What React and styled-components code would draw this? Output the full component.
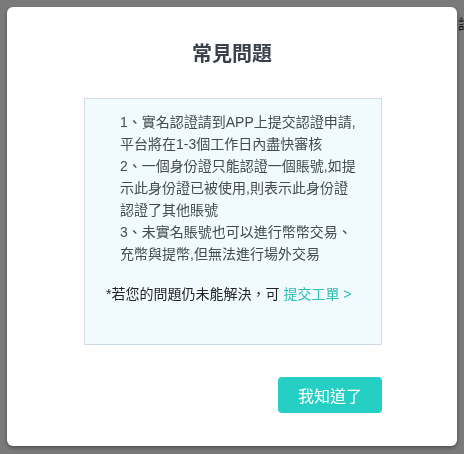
import React from "react";
import styled, { createGlobalStyle } from "styled-components";

const Global = createGlobalStyle`
  html, body { margin: 0; padding: 0; }
  body {
    width: 464px;
    height: 454px;
    overflow: hidden;
    background: #ffffff;
    font-family: "Liberation Sans", "Noto Sans CJK TC", sans-serif;
  }
`;

const Page = styled.div`
  width: 464px;
  height: 454px;
  overflow: hidden;
`;

const PageHeader = styled.div`
  display: flex;
  padding: 13px 0 0 458px;
  white-space: nowrap;
  font-size: 14px;
  color: #222;
`;

const Backdrop = styled.div`
  position: fixed;
  inset: 0;
  background: rgba(0, 0, 0, 0.52);
  display: flex;
  justify-content: flex-start;
  align-items: flex-start;
  padding: 7px 0 0 7px;
`;

const Modal = styled.div`
  width: 450px;
  height: 439px;
  box-sizing: border-box;
  background: #ffffff;
  border-radius: 6px;
  box-shadow: 0 2px 4px rgba(0, 0, 0, 0.35);
  padding-top: 33px;
  display: flex;
  flex-direction: column;
  align-items: center;
`;

const Title = styled.h2`
  margin: 0;
  font-size: 20px;
  line-height: 28px;
  font-weight: 700;
  color: #3b404c;
`;

const Column = styled.div`
  width: 298px;
  margin: 30px 0 0 2px;
  display: flex;
  flex-direction: column;
  align-items: stretch;
`;

const InfoBox = styled.div`
  box-sizing: border-box;
  height: 247px;
  border: 1px solid #cfdbe5;
  background: #f1fafc;
  padding: 12px 22px 0 21px;
`;

const List = styled.div`
  padding-left: 14px;
  font-size: 14px;
  line-height: 22px;
  color: #454a52;
`;

const Note = styled.p`
  margin: 18px 0 0;
  font-size: 14px;
  line-height: 22px;
  color: #1f2227;
`;

const Link = styled.a`
  color: #2fbdb3;
  text-decoration: none;
  margin-left: 4px;
`;

const Footer = styled.div`
  display: flex;
  justify-content: flex-end;
  margin-top: 32px;
`;

const Button = styled.button`
  width: 104px;
  height: 36px;
  border: none;
  border-radius: 4px;
  background: #26cfc4;
  color: #ffffff;
  font-family: "Liberation Sans", "Noto Sans CJK TC", sans-serif;
  font-size: 16px;
  cursor: pointer;
  padding: 0;
`;

export default function App() {
  return (
    <>
      <Global />
      <Page>
        <PageHeader>語言</PageHeader>
      </Page>
      <Backdrop>
        <Modal>
          <Title>常見問題</Title>
          <Column>
            <InfoBox>
              <List>
                <div>1、實名認證請到APP上提交認證申請,平台將在1-3個工作日內盡快審核</div>
                <div>2、一個身份證只能認證一個賬號,如提示此身份證已被使用,則表示此身份證認證了其他賬號</div>
                <div>3、未實名賬號也可以進行幣幣交易、充幣與提幣,但無法進行場外交易</div>
              </List>
              <Note>
                *若您的問題仍未能解決，可<Link href="#">提交工單 &gt;</Link>
              </Note>
            </InfoBox>
            <Footer>
              <Button>我知道了</Button>
            </Footer>
          </Column>
        </Modal>
      </Backdrop>
    </>
  );
}
